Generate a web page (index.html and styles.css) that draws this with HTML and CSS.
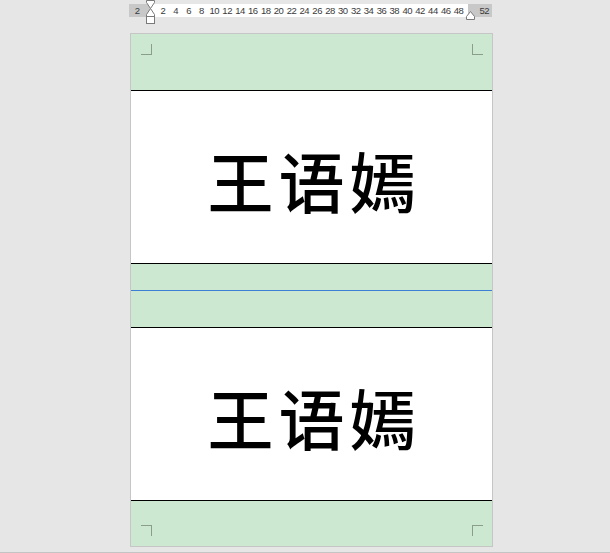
FILE: index.html
```html
<!DOCTYPE html>
<html lang="zh">
<head>
<meta charset="utf-8">
<title>Labels</title>
<link rel="stylesheet" href="styles.css">
</head>
<body>
<div class="ruler-wrap">
  <div class="ruler">
    <span class="n">2</span><span class="n"></span><span class="n">2</span><span class="n">4</span><span class="n">6</span><span class="n">8</span><span class="n">10</span><span class="n">12</span><span class="n">14</span><span class="n">16</span><span class="n">18</span><span class="n">20</span><span class="n">22</span><span class="n">24</span><span class="n">26</span><span class="n">28</span><span class="n">30</span><span class="n">32</span><span class="n">34</span><span class="n">36</span><span class="n">38</span><span class="n">40</span><span class="n">42</span><span class="n">44</span><span class="n">46</span><span class="n">48</span><span class="n"></span><span class="n">52</span>
    <svg class="indent-left" width="11" height="25" viewBox="0 0 11 25">
      <path d="M1.5 0.5 H9.5 V2.5 L5.5 8.5 L1.5 2.5 Z" fill="#fff" stroke="#7a7a7a" stroke-width="1"/>
      <path d="M5.5 8.5 L9.5 14.5 V16.5 H1.5 V14.5 Z" fill="#fff" stroke="#7a7a7a" stroke-width="1"/>
      <rect x="1.5" y="16.5" width="8" height="7" fill="#fff" stroke="#7a7a7a" stroke-width="1"/>
    </svg>
    <svg class="indent-right" width="11" height="9" viewBox="0 0 11 9">
      <path d="M5.5 0.5 L9.5 5.5 V8.5 H1.5 V5.5 Z" fill="#fff" stroke="#7a7a7a" stroke-width="1"/>
    </svg>
  </div>
</div>

<div class="page">
  <div class="margin margin-top">
    <span class="mark mark-tl"></span>
    <span class="mark mark-tr"></span>
  </div>
  <div class="rule"></div>
  <div class="label">王语嫣</div>
  <div class="rule"></div>
  <div class="gap">
    <div class="gap-a"></div>
    <div class="blue"></div>
    <div class="gap-b"></div>
  </div>
  <div class="rule"></div>
  <div class="label">王语嫣</div>
  <div class="rule"></div>
  <div class="margin margin-bottom">
    <span class="mark mark-bl"></span>
    <span class="mark mark-br"></span>
  </div>
</div>
<div class="bottom-line"></div>
</body>
</html>
```

FILE: styles.css
```css
html, body {
  margin: 0;
  padding: 0;
}
body {
  background: #e6e6e6;
  width: 610px;
  height: 553px;
  overflow: hidden;
  position: relative;
  font-family: "Liberation Sans", Arial, sans-serif;
}
.ruler-wrap {
  padding-top: 4px;
  padding-left: 129px;
  height: 13px;
}
.ruler {
  position: relative;
  width: 363px;
  height: 13px;
  padding-left: 1.7px;
  box-sizing: border-box;
  display: flex;
  align-items: center;
  background: linear-gradient(to right, #c8c8c8 0 21px, #ffffff 21px 339px, #c8c8c8 339px);
}
.n {
  flex: 0 0 12.87px;
  width: 12.87px;
  display: flex;
  justify-content: center;
  white-space: nowrap;
  font-size: 9.5px;
  line-height: 13px;
  color: #3a3a3a;
  letter-spacing: -0.5px;
}
.indent-left {
  position: absolute;
  left: 16px;
  top: -4px;
}
.indent-right {
  position: absolute;
  left: 336px;
  top: 7px;
}
.page {
  margin: 16px 0 0 130px;
  width: 363px;
  box-sizing: border-box;
  border: 1px solid #c6c6c6;
  display: flex;
  flex-direction: column;
}
.margin {
  background: #cde8d1;
  display: flex;
  justify-content: space-between;
  box-sizing: border-box;
}
.margin-top {
  height: 56px;
  padding: 10px 9px 0 10px;
  align-items: flex-start;
}
.margin-bottom {
  height: 45px;
  padding: 24px 9px 0 10px;
  align-items: flex-start;
}
.mark {
  width: 11px;
  height: 11px;
  box-sizing: border-box;
  border: 0 solid #8b9e8c;
}
.mark-tl { border-right-width: 1px; border-bottom-width: 1px; }
.mark-tr { border-left-width: 1px; border-bottom-width: 1px; }
.mark-bl { border-right-width: 1px; border-top-width: 1px; }
.mark-br { border-left-width: 1px; border-top-width: 1px; }
.rule {
  height: 1px;
  background: #000;
}
.label {
  height: 172px;
  background: #fff;
  display: flex;
  align-items: center;
  justify-content: center;
  box-sizing: border-box;
  padding-top: 4px;
  padding-left: 5px;
  letter-spacing: 5px;
  font-family: "AR PL UKai CN", "KaiTi", "Noto Sans CJK SC", sans-serif;
  font-size: 66px;
  font-weight: 500;
  line-height: 1;
  color: #000;
}
.gap {
  display: flex;
  flex-direction: column;
  background: #cde8d1;
}
.gap-a { height: 26px; }
.blue { height: 1px; background: #3c7fd4; }
.gap-b { height: 36px; }
.bottom-line {
  position: absolute;
  left: 0;
  right: 0;
  bottom: 0;
  height: 1px;
  background: #c4c4c4;
}
```
